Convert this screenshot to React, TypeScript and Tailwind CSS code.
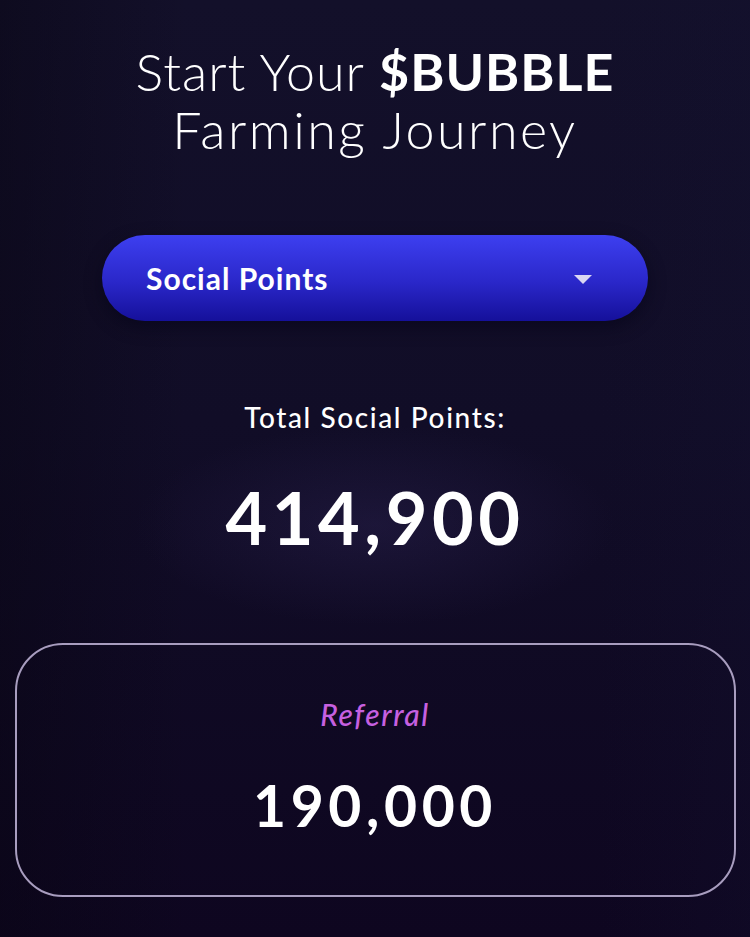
import { useState } from 'react'

const stats = {
  total: '414,900',
  referral: '190,000',
}

export default function App() {
  const [source] = useState('Social Points')

  return (
    <div
      className="relative h-[937px] w-[750px] overflow-hidden bg-[#0f0b22] text-white"
      style={{ fontFamily: 'Lato, "Noto Sans", sans-serif' }}
    >
      {/* Background glows */}
      <div className="pointer-events-none absolute inset-0 bg-[linear-gradient(180deg,#13102a_0%,#110d27_45%,#0e0620_100%)]" />
      <div className="pointer-events-none absolute inset-0 bg-[radial-gradient(ellipse_240px_100px_at_375px_525px,rgba(55,45,100,0.3),transparent)]" />
      <div className="pointer-events-none absolute inset-0 bg-[linear-gradient(90deg,rgba(8,5,18,0.45)_0%,transparent_25%,transparent_80%,rgba(20,18,50,0.25)_100%)]" />

      <div className="relative flex flex-col items-center">
        <h1 className="mt-[42px] text-center text-[52px] leading-[58px] font-light">
          <span className="block tracking-[1px]">
            Start Your <span className="font-bold">$BUBBLE</span>
          </span>
          <span className="block tracking-[2.5px]">Farming Journey</span>
        </h1>

        <button className="mt-[77px] flex h-[86px] w-[546px] items-center justify-between rounded-full bg-[linear-gradient(180deg,#3d3ff0_0%,#2a27c9_55%,#15109a_100%)] pr-[56px] pl-[44px] shadow-[0_6px_18px_rgba(0,0,20,0.45)]">
          <span className="text-[30px] font-bold tracking-[1px]">{source}</span>
          <svg width="18" height="9" viewBox="0 0 18 9" className="mt-[2px]">
            <path d="M0 0h18L9 9z" fill="#d9d6f2" />
          </svg>
        </button>

        <p className="mt-[79px] text-[28px] leading-[34px] font-medium tracking-[1.6px]">Total Social Points:</p>

        <p className="mt-[43px] text-[72px] leading-[80px] font-bold tracking-[4.5px]">{stats.total}</p>

        <div className="mt-[86px] flex h-[254px] w-[721px] flex-col items-center rounded-[48px] border-2 border-[#a89dbf]">
          <p className="mt-[51px] text-[30px] leading-[36px] font-medium tracking-[1.6px] text-[#c660e0] italic">Referral</p>
          <p className="mt-[40px] text-[57px] leading-[66px] font-bold tracking-[4.6px]">{stats.referral}</p>
        </div>
      </div>
    </div>
  )
}
